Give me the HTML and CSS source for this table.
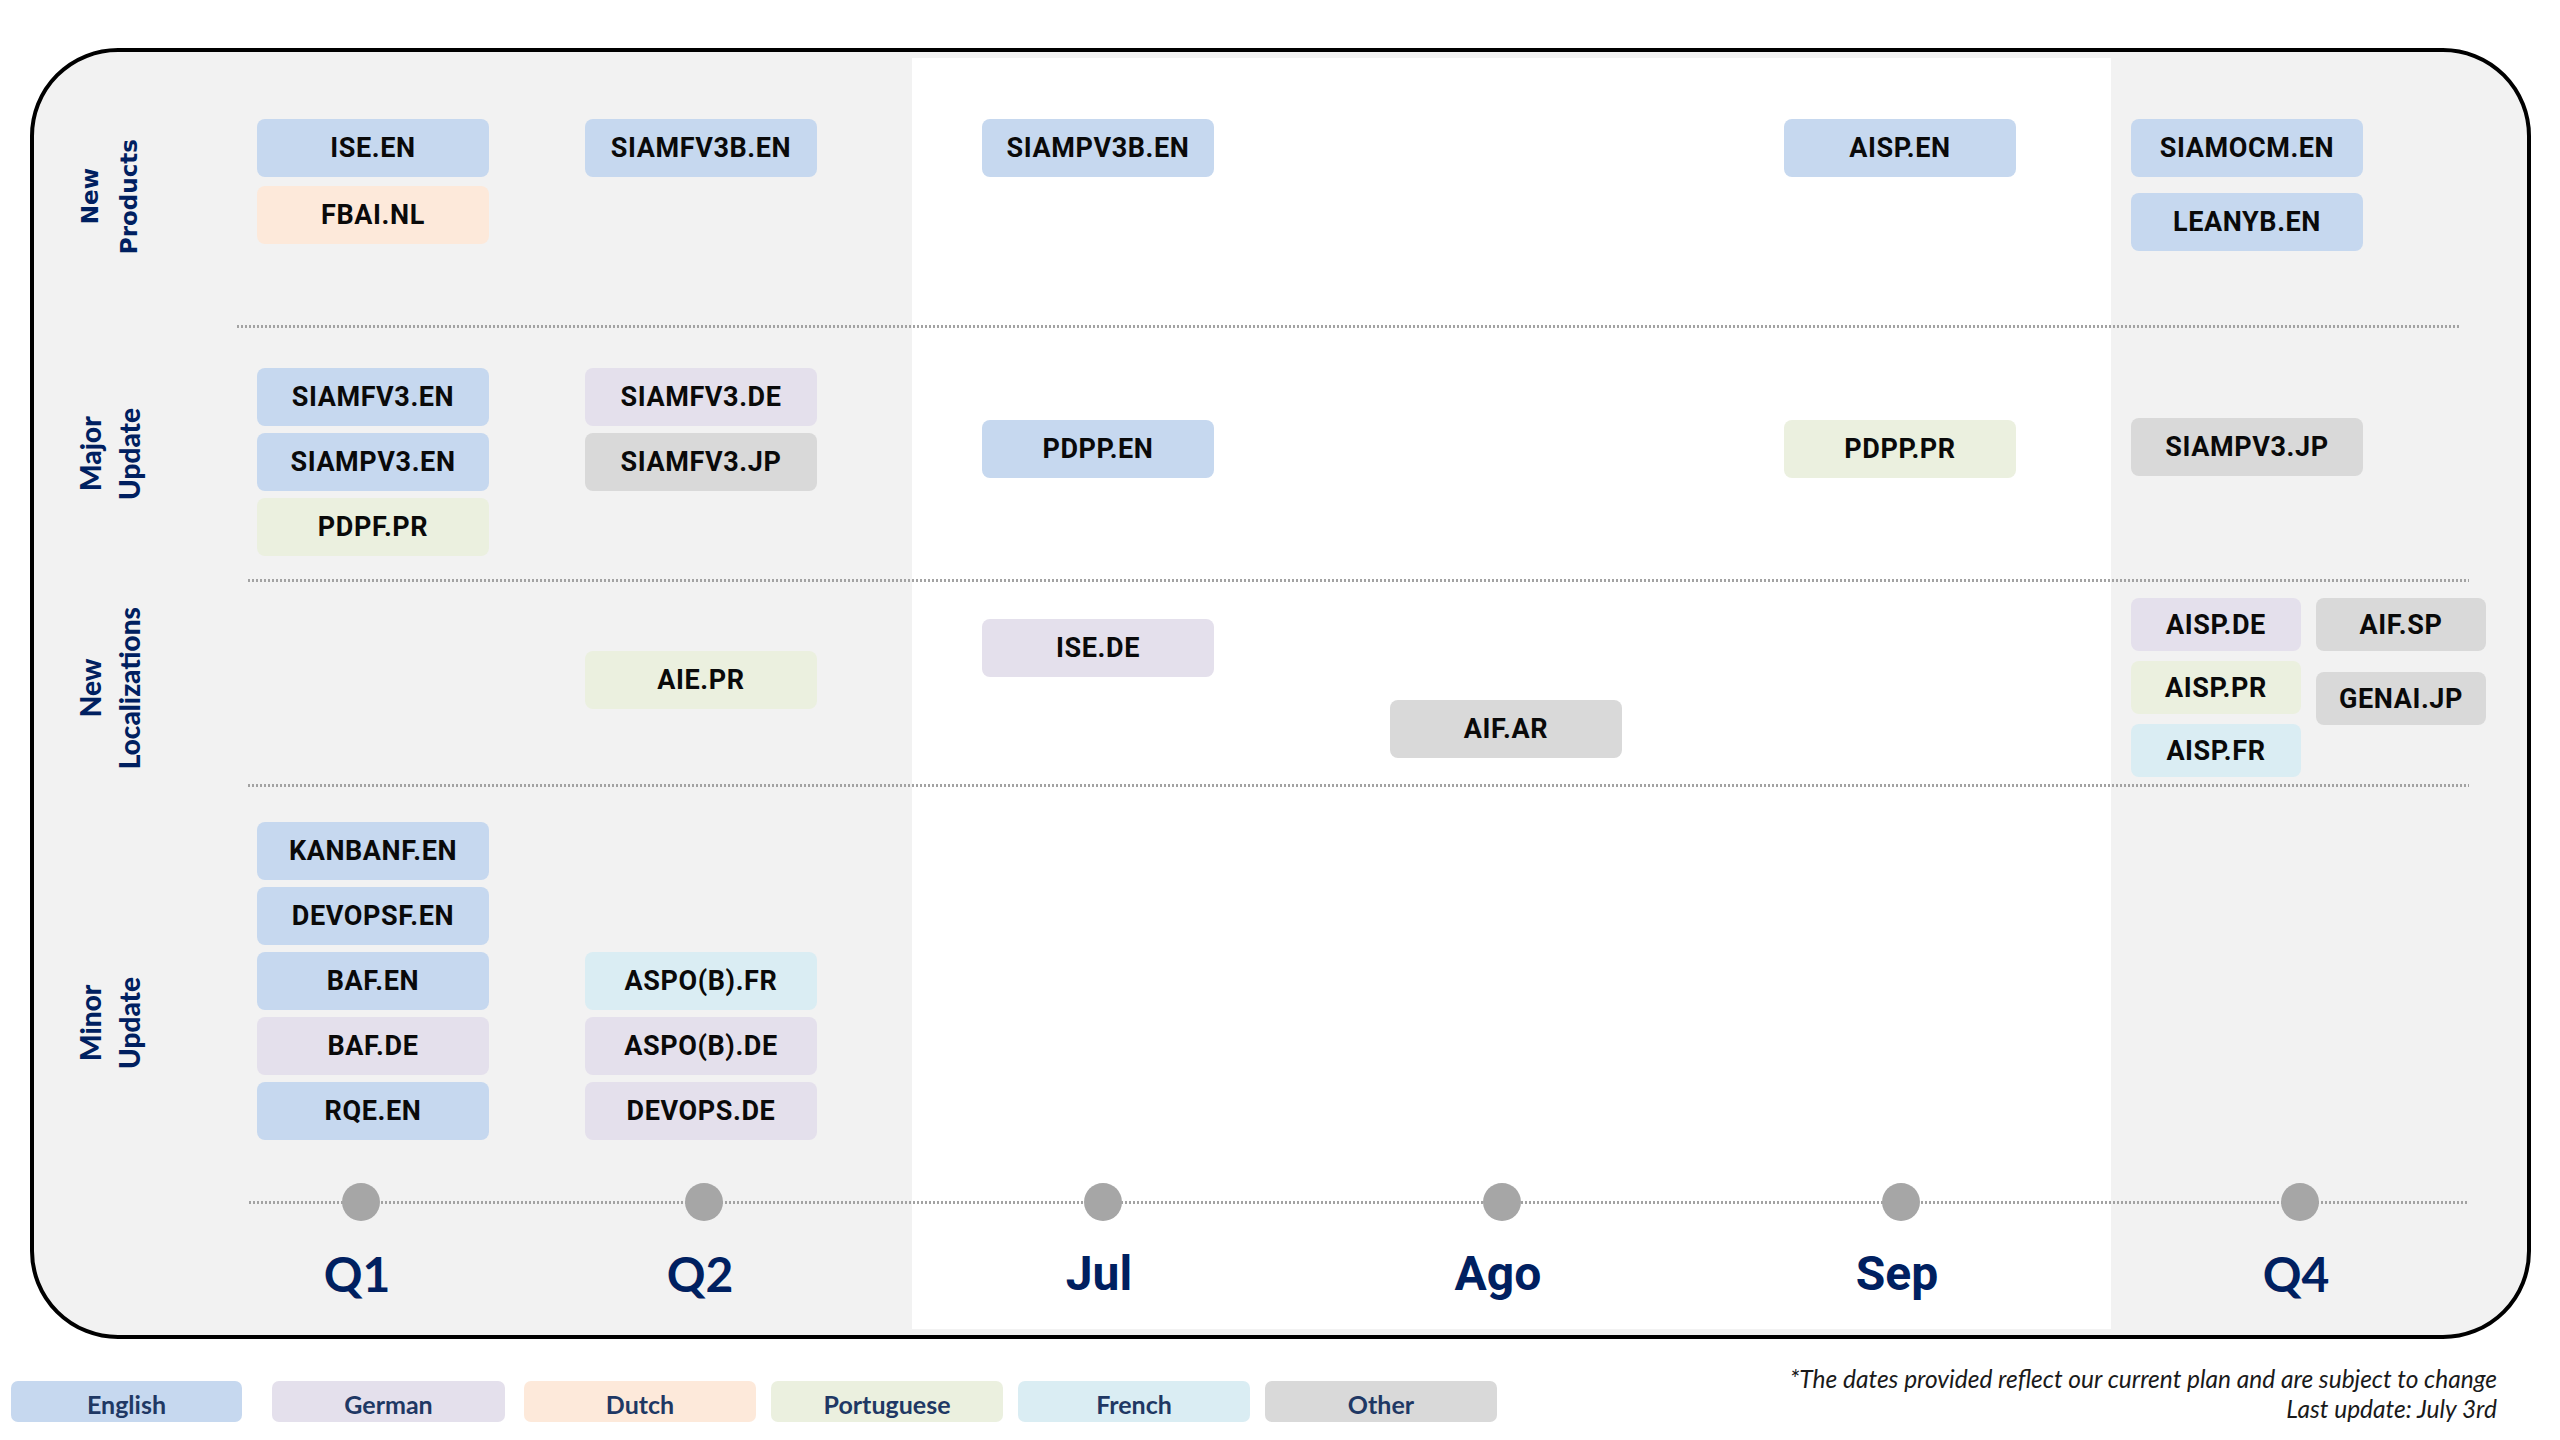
FILE: index.html
```html
<!DOCTYPE html>
<html lang="en">
<head>
<meta charset="utf-8">
<title>Roadmap</title>
<link rel="stylesheet" href="styles.css">
</head>
<body>
<div class="page">
  <div class="frame">
    <!-- New Products -->
    <div class="row row--np">
      <div class="label label--np"><span class="label-text label-text--geo">New<br>Products</span></div>
      <div class="cell pt-67"><div class="chip en">ISE.EN</div><div class="chip nl">FBAI.NL</div></div>
      <div class="cell pt-67"><div class="chip en">SIAMFV3B.EN</div></div>
      <div class="cell pt-67"><div class="chip en">SIAMPV3B.EN</div></div>
      <div class="cell"></div>
      <div class="cell pt-67"><div class="chip en">AISP.EN</div></div>
      <div class="cell cell--loose pt-67"><div class="chip en">SIAMOCM.EN</div><div class="chip en">LEANYB.EN</div></div>
    </div>
    <div class="sep sep--first"></div>

    <!-- Major Update -->
    <div class="row row--major">
      <div class="label"><span class="label-text">Major<br>Update</span></div>
      <div class="cell cell--tight pt-40"><div class="chip en">SIAMFV3.EN</div><div class="chip en">SIAMPV3.EN</div><div class="chip pt">PDPF.PR</div></div>
      <div class="cell cell--tight pt-40"><div class="chip de">SIAMFV3.DE</div><div class="chip ot">SIAMFV3.JP</div></div>
      <div class="cell pt-92"><div class="chip en">PDPP.EN</div></div>
      <div class="cell"></div>
      <div class="cell pt-92"><div class="chip pt">PDPP.PR</div></div>
      <div class="cell pt-90"><div class="chip ot">SIAMPV3.JP</div></div>
    </div>
    <div class="sep"></div>

    <!-- New Localizations -->
    <div class="row row--loc">
      <div class="label label--loc"><span class="label-text">New<br>Localizations</span></div>
      <div class="cell"></div>
      <div class="cell pt-69"><div class="chip pt">AIE.PR</div></div>
      <div class="cell pt-37"><div class="chip de">ISE.DE</div></div>
      <div class="cell pt-118"><div class="chip ot">AIF.AR</div></div>
      <div class="cell"></div>
      <div class="cell pt-16">
        <div class="subgrid">
          <div class="substack">
            <div class="chip chip--sm de">AISP.DE</div>
            <div class="chip chip--sm pt">AISP.PR</div>
            <div class="chip chip--sm fr">AISP.FR</div>
          </div>
          <div class="substack substack--right">
            <div class="chip chip--sm ot">AIF.SP</div>
            <div class="chip chip--sm ot">GENAI.JP</div>
          </div>
        </div>
      </div>
    </div>
    <div class="sep"></div>

    <!-- Minor Update -->
    <div class="row row--minor">
      <div class="label label--minor"><span class="label-text">Minor<br>Update</span></div>
      <div class="cell cell--tight pt-35">
        <div class="chip en">KANBANF.EN</div>
        <div class="chip en">DEVOPSF.EN</div>
        <div class="chip en">BAF.EN</div>
        <div class="chip de">BAF.DE</div>
        <div class="chip en">RQE.EN</div>
      </div>
      <div class="cell cell--tight pt-165">
        <div class="chip fr">ASPO(B).FR</div>
        <div class="chip de">ASPO(B).DE</div>
        <div class="chip de">DEVOPS.DE</div>
      </div>
      <div class="cell"></div>
      <div class="cell"></div>
      <div class="cell"></div>
      <div class="cell"></div>
    </div>

    <!-- Timeline axis -->
    <div class="axis">
      <div class="tick tick--q1"><span class="dot"></span><span class="tick-label tick-label--q">Q1</span></div>
      <div class="tick"><span class="dot"></span><span class="tick-label tick-label--q">Q2</span></div>
      <div class="tick"><span class="dot"></span><span class="tick-label tick-label--m">Jul</span></div>
      <div class="tick"><span class="dot"></span><span class="tick-label tick-label--m">Ago</span></div>
      <div class="tick"><span class="dot"></span><span class="tick-label tick-label--m">Sep</span></div>
      <div class="tick"><span class="dot"></span><span class="tick-label tick-label--q">Q4</span></div>
    </div>
  </div>

  <div class="bottom">
    <div class="legend">
      <div class="legend-chip en legend-chip--en">English</div>
      <div class="legend-chip de legend-chip--de">German</div>
      <div class="legend-chip nl">Dutch</div>
      <div class="legend-chip pt">Portuguese</div>
      <div class="legend-chip fr">French</div>
      <div class="legend-chip ot">Other</div>
    </div>
    <div class="note">
      <div>*The dates provided reflect our current plan and are subject to change</div>
      <div>Last update: July 3rd</div>
    </div>
  </div>
</div>
</body>
</html>
```

FILE: styles.css
```css
* { box-sizing: border-box; }

html, body {
  margin: 0;
  padding: 0;
  background: #ffffff;
}

.page {
  width: 2560px;
  height: 1440px;
  overflow: hidden;
  padding-top: 48px;
  padding-left: 30px;
}

/* Rounded frame with gray fill and the white month panel */
.frame {
  width: 2501px;
  height: 1291px;
  border: 4px solid #000;
  border-radius: 88px;
  background:
    linear-gradient(#ffffff, #ffffff) 878px 6px / 1199px calc(100% - 12px) no-repeat,
    #f2f2f2;
  display: flex;
  flex-direction: column;
}

.row {
  display: grid;
  grid-template-columns: 223px 328px 397px 408px 394px 347px 1fr;
}
.row--np { height: 273px; }
.row--major { height: 251px; }
.row--loc { height: 202px; }
.row--minor { height: 396px; }

.sep {
  flex: none;
  height: 3px;
  width: 2221px;
  margin-left: 214px;
  background: repeating-linear-gradient(to right, #a3a3a3 0 2px, transparent 2px 4px);
}
.sep--first {
  margin-left: 203px;
  width: 2223px;
}

/* Row labels */
.label {
  display: flex;
  align-items: center;
  padding-left: 37px;
}
.label--np { padding-top: 17px; }
.label--loc { padding-top: 10px; }
.label--minor { padding-top: 76px; }

.label-text {
  writing-mode: vertical-rl;
  transform: rotate(180deg);
  text-align: center;
  line-height: 39px;
  font-family: "Lato", "Open Sans", sans-serif;
  font-weight: 900;
  font-size: 28px;
  color: #002060;
}
.label-text--geo {
  font-family: "DejaVu Sans", "Noto Sans", sans-serif;
  font-weight: 700;
  font-size: 23px;
}

/* Cells and chips */
.cell {
  display: flex;
  flex-direction: column;
  align-items: flex-start;
  gap: 9px;
}
.cell--tight { gap: 7px; }
.cell--loose { gap: 16px; }

.pt-16 { padding-top: 16px; }
.pt-35 { padding-top: 35px; }
.pt-37 { padding-top: 37px; }
.pt-40 { padding-top: 40px; }
.pt-67 { padding-top: 67px; }
.pt-69 { padding-top: 69px; }
.pt-90 { padding-top: 90px; }
.pt-92 { padding-top: 92px; }
.pt-118 { padding-top: 118px; }
.pt-165 { padding-top: 165px; }

.chip {
  width: 232px;
  height: 58px;
  border-radius: 8px;
  display: flex;
  align-items: center;
  justify-content: center;
  font-family: "Roboto", "Liberation Sans", sans-serif;
  font-weight: 700;
  font-size: 27px;
  letter-spacing: 0.6px;
  color: #0a0a0a;
  white-space: nowrap;
}
.chip--sm {
  width: 170px;
  height: 53px;
}

.subgrid {
  display: flex;
  gap: 15px;
  align-items: flex-start;
}
.substack {
  display: flex;
  flex-direction: column;
  gap: 10px;
}
.substack--right { gap: 21px; }

.en { background: #c6d8ef; }
.de { background: #e4e0ec; }
.nl { background: #fde9da; }
.pt { background: #ebf0df; }
.fr { background: #daedf3; }
.ot { background: #d9d9d9; }

/* Timeline axis */
.axis {
  display: flex;
  padding-left: 227px;
  gap: 199px;
  background: repeating-linear-gradient(to right, #a3a3a3 0 2px, transparent 2px 4px) 215px 18px / 2220px 3px no-repeat;
}
.tick {
  width: 200px;
  display: flex;
  flex-direction: column;
  align-items: center;
}
.tick--q1 { margin-right: -56px; }

.dot {
  width: 38px;
  height: 38px;
  border-radius: 50%;
  background: #a6a6a6;
}
.tick-label {
  margin-top: 25px;
  margin-right: 8px;
  line-height: 56px;
  font-size: 48px;
  font-weight: 700;
  color: #002060;
}
.tick-label--q { font-family: "Lato", "Open Sans", sans-serif; }
.tick-label--m { font-family: "Roboto", "Liberation Sans", sans-serif; }

/* Legend and footnote */
.bottom {
  display: flex;
  justify-content: space-between;
  align-items: flex-start;
  margin-left: -30px;
  padding-right: 63px;
  margin-top: 25px;
}
.legend {
  display: flex;
  gap: 15px;
  margin-top: 17px;
  padding-left: 11px;
}
.legend-chip {
  width: 232px;
  height: 41px;
  border-radius: 7px;
  display: flex;
  align-items: center;
  justify-content: center;
  padding-top: 4px;
  font-family: "Lato", "Open Sans", sans-serif;
  font-weight: 700;
  font-size: 25px;
  color: #1f3864;
}
.legend-chip--en { width: 231px; margin-right: 15px; }
.legend-chip--de { width: 233px; margin-right: 4px; }

.note {
  text-align: right;
  font-family: "Lato", "Open Sans", sans-serif;
  font-style: italic;
  font-size: 24.5px;
  line-height: 30px;
  color: #1a1a1a;
}
```
